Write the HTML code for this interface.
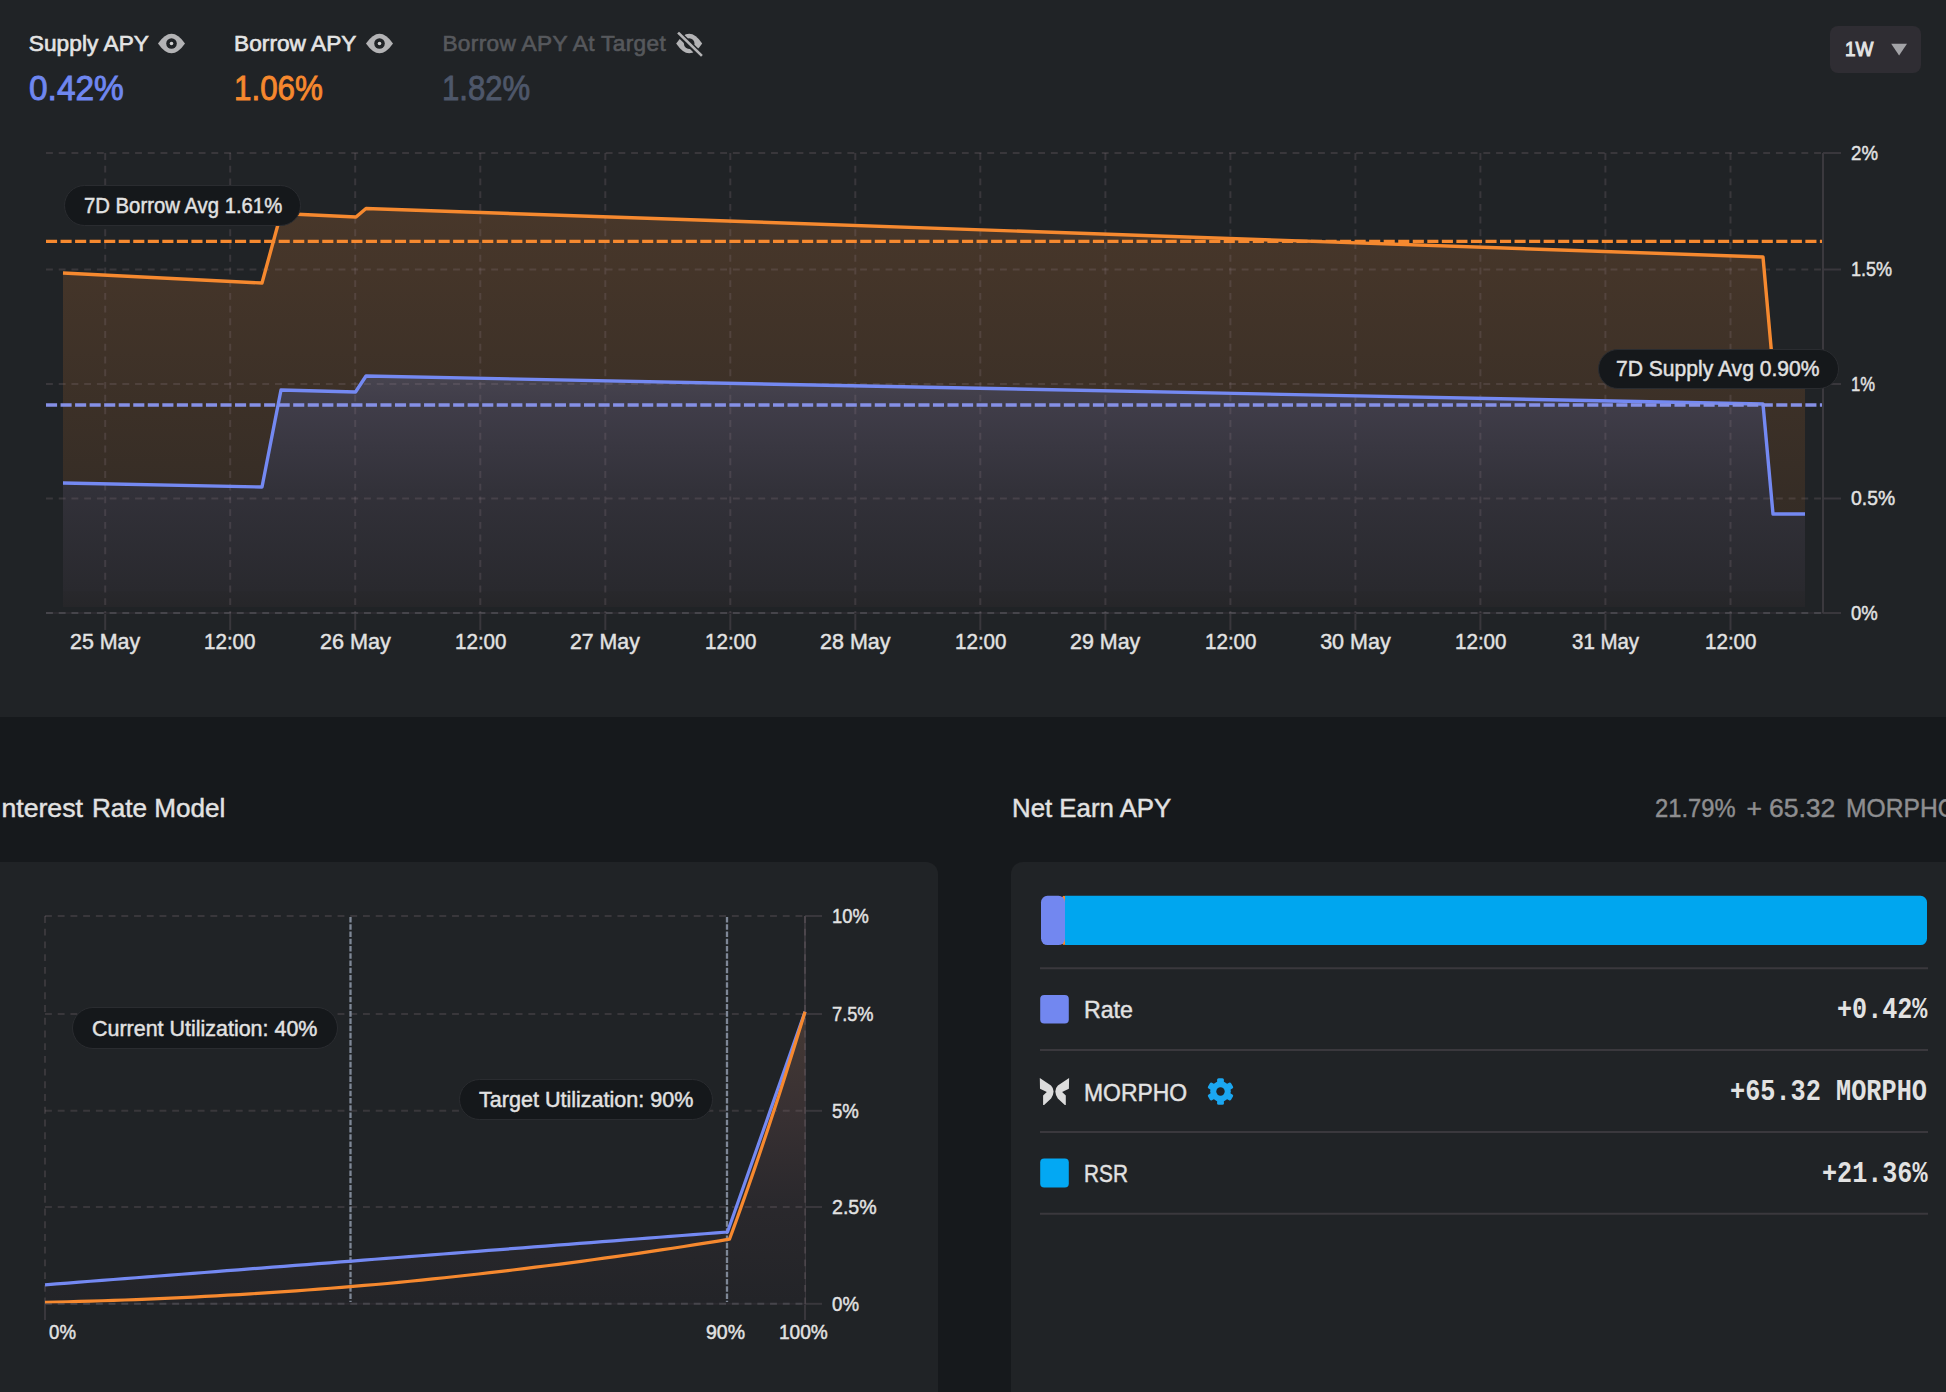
<!DOCTYPE html>
<html><head><meta charset="utf-8"><style>
html,body{margin:0;padding:0}
body{width:1946px;height:1392px;overflow:hidden;position:relative;background:#16191c;font-family:"Liberation Sans",sans-serif}
.b{position:absolute}
.t{position:absolute;white-space:nowrap}
.pill{position:absolute;background:#15181b;border:1.5px solid #2a2c30;border-radius:22px;box-sizing:border-box}
svg{position:absolute;left:0;top:0}
</style></head><body>
<div class="b" style="left:-12px;top:-12px;width:1970px;height:729px;background:#202326;border-radius:12px"></div>
<div class="b" style="left:-40px;top:862px;width:978px;height:600px;background:#202326;border-radius:12px"></div>
<div class="b" style="left:1011px;top:862px;width:1000px;height:600px;background:#202326;border-radius:12px"></div>
<div class="b" style="left:1830.3px;top:26.1px;width:90.7px;height:46.8px;background:#2f2d33;border-radius:8px"></div>
<svg width="1946" height="1392" viewBox="0 0 1946 1392">
<line x1="1823" y1="153" x2="1841" y2="153" stroke="#39373c" stroke-width="2"/>
<line x1="1823" y1="269.5" x2="1841" y2="269.5" stroke="#39373c" stroke-width="2"/>
<line x1="1823" y1="384" x2="1841" y2="384" stroke="#39373c" stroke-width="2"/>
<line x1="1823" y1="498.5" x2="1841" y2="498.5" stroke="#39373c" stroke-width="2"/>
<line x1="1823" y1="613" x2="1841" y2="613" stroke="#39373c" stroke-width="2"/>
<line x1="105.2" y1="613" x2="105.2" y2="630" stroke="#39373c" stroke-width="2"/>
<line x1="230.2" y1="613" x2="230.2" y2="630" stroke="#39373c" stroke-width="2"/>
<line x1="355.2" y1="613" x2="355.2" y2="630" stroke="#39373c" stroke-width="2"/>
<line x1="480.3" y1="613" x2="480.3" y2="630" stroke="#39373c" stroke-width="2"/>
<line x1="605.3" y1="613" x2="605.3" y2="630" stroke="#39373c" stroke-width="2"/>
<line x1="730.3" y1="613" x2="730.3" y2="630" stroke="#39373c" stroke-width="2"/>
<line x1="855.3" y1="613" x2="855.3" y2="630" stroke="#39373c" stroke-width="2"/>
<line x1="980.3" y1="613" x2="980.3" y2="630" stroke="#39373c" stroke-width="2"/>
<line x1="1105.4" y1="613" x2="1105.4" y2="630" stroke="#39373c" stroke-width="2"/>
<line x1="1230.4" y1="613" x2="1230.4" y2="630" stroke="#39373c" stroke-width="2"/>
<line x1="1355.4" y1="613" x2="1355.4" y2="630" stroke="#39373c" stroke-width="2"/>
<line x1="1480.4" y1="613" x2="1480.4" y2="630" stroke="#39373c" stroke-width="2"/>
<line x1="1605.4" y1="613" x2="1605.4" y2="630" stroke="#39373c" stroke-width="2"/>
<line x1="1730.5" y1="613" x2="1730.5" y2="630" stroke="#39373c" stroke-width="2"/>
<defs>
<linearGradient id="gO" x1="0" y1="208" x2="0" y2="607" gradientUnits="userSpaceOnUse"><stop offset="0" stop-color="#48372a"/><stop offset="1" stop-color="#2f2924"/></linearGradient>
<linearGradient id="gS" x1="0" y1="376" x2="0" y2="607" gradientUnits="userSpaceOnUse"><stop offset="0" stop-color="#47444f"/><stop offset="0.12" stop-color="#403d49"/><stop offset="0.5" stop-color="#323139"/><stop offset="0.93" stop-color="#29292e"/><stop offset="0.93" stop-color="#28282c"/><stop offset="1" stop-color="#262629"/></linearGradient>
<linearGradient id="gI" x1="0" y1="1012" x2="0" y2="1304" gradientUnits="userSpaceOnUse"><stop offset="0" stop-color="#4a3c36"/><stop offset="0.34" stop-color="#3b3234"/><stop offset="0.65" stop-color="#2b292d"/><stop offset="1" stop-color="#232428"/></linearGradient>
</defs>
<polygon points="63,273 262,283 281,213.5 356,217 366,208.5 1763,257 1773,369 1805,369 1805,607 63,607" fill="url(#gO)"/>
<polygon points="63,483 262,487 281,390 355.5,392 366,376 1763,404 1773,514 1805,514 1805,607 63,607" fill="url(#gS)"/>
<line x1="46" y1="613" x2="1823" y2="613" stroke="#2b2a2f" stroke-width="2"/>
<line x1="46" y1="613" x2="1823" y2="613" stroke="#46454b" stroke-width="2" stroke-dasharray="6.9 5.82"/>
<line x1="46" y1="153" x2="1823" y2="153" stroke="#927e8a" stroke-opacity="0.22" stroke-width="2" stroke-dasharray="6.9 5.82"/>
<line x1="46" y1="269.5" x2="1823" y2="269.5" stroke="#927e8a" stroke-opacity="0.22" stroke-width="2" stroke-dasharray="6.9 5.82"/>
<line x1="46" y1="384" x2="1823" y2="384" stroke="#927e8a" stroke-opacity="0.22" stroke-width="2" stroke-dasharray="6.9 5.82"/>
<line x1="46" y1="498.5" x2="1823" y2="498.5" stroke="#927e8a" stroke-opacity="0.22" stroke-width="2" stroke-dasharray="6.9 5.82"/>
<line x1="105.2" y1="153" x2="105.2" y2="613" stroke="#927e8a" stroke-opacity="0.22" stroke-width="2" stroke-dasharray="6.9 5.82"/>
<line x1="230.2" y1="153" x2="230.2" y2="613" stroke="#927e8a" stroke-opacity="0.22" stroke-width="2" stroke-dasharray="6.9 5.82"/>
<line x1="355.2" y1="153" x2="355.2" y2="613" stroke="#927e8a" stroke-opacity="0.22" stroke-width="2" stroke-dasharray="6.9 5.82"/>
<line x1="480.3" y1="153" x2="480.3" y2="613" stroke="#927e8a" stroke-opacity="0.22" stroke-width="2" stroke-dasharray="6.9 5.82"/>
<line x1="605.3" y1="153" x2="605.3" y2="613" stroke="#927e8a" stroke-opacity="0.22" stroke-width="2" stroke-dasharray="6.9 5.82"/>
<line x1="730.3" y1="153" x2="730.3" y2="613" stroke="#927e8a" stroke-opacity="0.22" stroke-width="2" stroke-dasharray="6.9 5.82"/>
<line x1="855.3" y1="153" x2="855.3" y2="613" stroke="#927e8a" stroke-opacity="0.22" stroke-width="2" stroke-dasharray="6.9 5.82"/>
<line x1="980.3" y1="153" x2="980.3" y2="613" stroke="#927e8a" stroke-opacity="0.22" stroke-width="2" stroke-dasharray="6.9 5.82"/>
<line x1="1105.4" y1="153" x2="1105.4" y2="613" stroke="#927e8a" stroke-opacity="0.22" stroke-width="2" stroke-dasharray="6.9 5.82"/>
<line x1="1230.4" y1="153" x2="1230.4" y2="613" stroke="#927e8a" stroke-opacity="0.22" stroke-width="2" stroke-dasharray="6.9 5.82"/>
<line x1="1355.4" y1="153" x2="1355.4" y2="613" stroke="#927e8a" stroke-opacity="0.22" stroke-width="2" stroke-dasharray="6.9 5.82"/>
<line x1="1480.4" y1="153" x2="1480.4" y2="613" stroke="#927e8a" stroke-opacity="0.22" stroke-width="2" stroke-dasharray="6.9 5.82"/>
<line x1="1605.4" y1="153" x2="1605.4" y2="613" stroke="#927e8a" stroke-opacity="0.22" stroke-width="2" stroke-dasharray="6.9 5.82"/>
<line x1="1730.5" y1="153" x2="1730.5" y2="613" stroke="#927e8a" stroke-opacity="0.22" stroke-width="2" stroke-dasharray="6.9 5.82"/>
<line x1="1823" y1="153" x2="1823" y2="613" stroke="#3b393e" stroke-width="2"/>
<polyline points="63,273 262,283 281,213.5 356,217 366,208.5 1763,257 1773,369 1805,369" fill="none" stroke="#f6892f" stroke-width="3.4" stroke-linejoin="round"/>
<polyline points="63,483 262,487 281,390 355.5,392 366,376 1763,404 1773,514 1805,514" fill="none" stroke="#7489f2" stroke-width="3.4" stroke-linejoin="round"/>
<line x1="46" y1="241.3" x2="1822" y2="241.3" stroke="#f6892f" stroke-width="3.3" stroke-dasharray="11.1 3.44"/>
<line x1="46" y1="405" x2="1822" y2="405" stroke="#8590e6" stroke-width="3.3" stroke-dasharray="11.1 3.44"/>
<line x1="805" y1="916" x2="822" y2="916" stroke="#39373c" stroke-width="2"/>
<line x1="805" y1="1014" x2="822" y2="1014" stroke="#39373c" stroke-width="2"/>
<line x1="805" y1="1110.8" x2="822" y2="1110.8" stroke="#39373c" stroke-width="2"/>
<line x1="805" y1="1207" x2="822" y2="1207" stroke="#39373c" stroke-width="2"/>
<line x1="805" y1="1303.8" x2="822" y2="1303.8" stroke="#39373c" stroke-width="2"/>
<line x1="45" y1="1304" x2="45" y2="1320" stroke="#39373c" stroke-width="2"/>
<line x1="805" y1="916" x2="805" y2="1320" stroke="#39373c" stroke-width="2"/>
<polygon points="45.0,1284.794 56.375,1283.9138866666667 67.75,1283.0337733333333 79.125,1282.15366 90.5,1281.2735466666666 101.875,1280.3934333333334 113.25,1279.51332 124.625,1278.6332066666666 136.0,1277.7530933333333 147.375,1276.87298 158.75,1275.9928666666667 170.125,1275.1127533333333 181.5,1274.23264 192.875,1273.3525266666666 204.25,1272.4724133333334 215.625,1271.5923 227.0,1270.7121866666666 238.375,1269.8320733333333 249.75,1268.95196 261.125,1268.0718466666667 272.5,1267.1917333333333 283.875,1266.31162 295.25,1265.4315066666666 306.625,1264.5513933333334 318.0,1263.67128 329.375,1262.7911666666666 340.75,1261.9110533333333 352.125,1261.03094 363.5,1260.1508266666667 374.875,1259.2707133333333 386.25,1258.3906 397.625,1257.5104866666666 409.0,1256.6303733333334 420.375,1255.75026 431.75,1254.8701466666666 443.125,1253.9900333333333 454.5,1253.10992 465.875,1252.2298066666667 477.25,1251.3496933333333 488.625,1250.46958 500.0,1249.5894666666666 511.375,1248.7093533333334 522.75,1247.82924 534.125,1246.9491266666666 545.5,1246.0690133333333 556.875,1245.1889 568.25,1244.3087866666667 579.625,1243.4286733333333 591.0,1242.54856 602.375,1241.6684466666666 613.75,1240.7883333333334 625.125,1239.90822 636.5,1239.0281066666666 647.875,1238.1479933333333 659.25,1237.2678799999999 670.625,1236.3877666666667 682.0,1235.5076533333333 693.375,1234.62754 704.75,1233.7474266666666 716.125,1232.8673133333334 727.5,1231.9872 731.375,1220.97964 735.25,1209.97208 739.125,1198.96452 743.0,1187.95696 746.875,1176.9494 750.75,1165.94184 754.625,1154.93428 758.5,1143.92672 762.375,1132.91916 766.25,1121.9116 770.125,1110.90404 774.0,1099.8964799999999 777.875,1088.88892 781.75,1077.88136 785.625,1066.8738 789.5,1055.86624 793.375,1044.85868 797.25,1033.85112 801.125,1022.84356 805.0,1011.836 805,1304 45,1304" fill="url(#gI)" fill-opacity="0.9"/>
<line x1="45" y1="1303.8" x2="805" y2="1303.8" stroke="#2b2a2f" stroke-width="2"/>
<line x1="45" y1="1303.8" x2="805" y2="1303.8" stroke="#46454b" stroke-width="2" stroke-dasharray="6.9 5.82"/>
<line x1="45" y1="916" x2="805" y2="916" stroke="#927e8a" stroke-opacity="0.22" stroke-width="2" stroke-dasharray="6.9 5.82"/>
<line x1="45" y1="1014" x2="805" y2="1014" stroke="#927e8a" stroke-opacity="0.22" stroke-width="2" stroke-dasharray="6.9 5.82"/>
<line x1="45" y1="1110.8" x2="805" y2="1110.8" stroke="#927e8a" stroke-opacity="0.22" stroke-width="2" stroke-dasharray="6.9 5.82"/>
<line x1="45" y1="1207" x2="805" y2="1207" stroke="#927e8a" stroke-opacity="0.22" stroke-width="2" stroke-dasharray="6.9 5.82"/>
<line x1="45" y1="916" x2="45" y2="1304" stroke="#927e8a" stroke-opacity="0.22" stroke-width="2" stroke-dasharray="6.9 5.82"/>
<line x1="805" y1="916" x2="805" y2="1304" stroke="#927e8a" stroke-opacity="0.22" stroke-width="2" stroke-dasharray="6.9 5.82"/>
<line x1="350.5" y1="917" x2="350.5" y2="1302" stroke="#7e8796" stroke-width="2.3" stroke-dasharray="5.6 1.64"/>
<line x1="727" y1="917" x2="727" y2="1302" stroke="#7e8796" stroke-width="2.3" stroke-dasharray="5.6 1.64"/>
<clipPath id="cI"><rect x="0" y="900" width="940" height="403.6"/></clipPath>
<g clip-path="url(#cI)"><polyline points="45.0,1284.794 56.375,1283.9138866666667 67.75,1283.0337733333333 79.125,1282.15366 90.5,1281.2735466666666 101.875,1280.3934333333334 113.25,1279.51332 124.625,1278.6332066666666 136.0,1277.7530933333333 147.375,1276.87298 158.75,1275.9928666666667 170.125,1275.1127533333333 181.5,1274.23264 192.875,1273.3525266666666 204.25,1272.4724133333334 215.625,1271.5923 227.0,1270.7121866666666 238.375,1269.8320733333333 249.75,1268.95196 261.125,1268.0718466666667 272.5,1267.1917333333333 283.875,1266.31162 295.25,1265.4315066666666 306.625,1264.5513933333334 318.0,1263.67128 329.375,1262.7911666666666 340.75,1261.9110533333333 352.125,1261.03094 363.5,1260.1508266666667 374.875,1259.2707133333333 386.25,1258.3906 397.625,1257.5104866666666 409.0,1256.6303733333334 420.375,1255.75026 431.75,1254.8701466666666 443.125,1253.9900333333333 454.5,1253.10992 465.875,1252.2298066666667 477.25,1251.3496933333333 488.625,1250.46958 500.0,1249.5894666666666 511.375,1248.7093533333334 522.75,1247.82924 534.125,1246.9491266666666 545.5,1246.0690133333333 556.875,1245.1889 568.25,1244.3087866666667 579.625,1243.4286733333333 591.0,1242.54856 602.375,1241.6684466666666 613.75,1240.7883333333334 625.125,1239.90822 636.5,1239.0281066666666 647.875,1238.1479933333333 659.25,1237.2678799999999 670.625,1236.3877666666667 682.0,1235.5076533333333 693.375,1234.62754 704.75,1233.7474266666666 716.125,1232.8673133333334 727.5,1231.9872 731.375,1220.97964 735.25,1209.97208 739.125,1198.96452 743.0,1187.95696 746.875,1176.9494 750.75,1165.94184 754.625,1154.93428 758.5,1143.92672 762.375,1132.91916 766.25,1121.9116 770.125,1110.90404 774.0,1099.8964799999999 777.875,1088.88892 781.75,1077.88136 785.625,1066.8738 789.5,1055.86624 793.375,1044.85868 797.25,1033.85112 801.125,1022.84356 805.0,1011.836" fill="none" stroke="#7489f2" stroke-width="3.2" stroke-linejoin="round"/>
<polyline points="45.0,1302.254 56.40833333333333,1302.0109083 67.81666666666666,1301.7414132 79.225,1301.4455147 90.63333333333333,1301.1232128 102.04166666666666,1300.7745075 113.45,1300.3993988 124.85833333333333,1299.9978867 136.26666666666665,1299.5699712 147.675,1299.1156523 159.08333333333331,1298.63493 170.49166666666667,1298.1278043 181.9,1297.5942752 193.30833333333334,1297.0343427 204.71666666666667,1296.4480068 216.125,1295.8352675 227.53333333333333,1295.1961248 238.94166666666666,1294.5305787 250.35,1293.8386292 261.7583333333333,1293.1202763 273.16666666666663,1292.37552 284.575,1291.6043603 295.98333333333335,1290.8067972 307.39166666666665,1289.9828307 318.8,1289.1324608 330.2083333333333,1288.2556875 341.6166666666667,1287.3525108 353.025,1286.4229307 364.43333333333334,1285.4669472 375.84166666666664,1284.4845603 387.25,1283.47577 398.65833333333336,1282.3823763 410.06666666666666,1281.2625792 421.475,1280.1163787 432.8833333333333,1278.9437748 444.2916666666667,1277.7447675 455.7,1276.5193568 467.10833333333335,1275.2675427 478.51666666666665,1273.9893252 489.925,1272.6847043 501.3333333333333,1271.35368 512.7416666666667,1269.9962523 524.15,1268.6124212 535.5583333333334,1267.2021867 546.9666666666667,1265.7655488 558.375,1264.3025075 569.7833333333333,1262.8130628 581.1916666666667,1261.2972147 592.6,1259.7549632 604.0083333333333,1258.1863083 615.4166666666666,1256.59125 626.825,1254.9697883 638.2333333333333,1253.3219232 649.6416666666667,1251.6476547 661.05,1249.9469828 672.4583333333334,1248.2199075 683.8666666666667,1246.4664288 695.275,1244.6865467 706.6833333333333,1242.8802612 718.0916666666667,1241.0475723 729.5,1239.18848 733.275,1228.8665742 737.05,1218.4345928 740.825,1207.8925358 744.6,1197.2404032 748.375,1186.478195 752.15,1175.6059112 755.925,1164.6235518 759.7,1153.5311168 763.475,1142.3286062 767.25,1131.01602 771.025,1119.5933582 774.8,1108.0606208 778.575,1096.4178078 782.35,1084.6649192 786.125,1072.8019550000001 789.9,1060.8289152 793.675,1048.7457998 797.45,1036.5526088000001 801.225,1024.2493422 805.0,1011.836" fill="none" stroke="#f6892f" stroke-width="3.2" stroke-linejoin="round"/></g>
<rect x="1061" y="895.8" width="6" height="49.3" rx="6" fill="#f6892f"/>
<path d="M1065,895.8 H1920.5 A6.5,6.5 0 0 1 1927,902.3 V938.6 A6.5,6.5 0 0 1 1920.5,945.1 H1065 Z" fill="#00a6ef"/>
<rect x="1041" y="895.8" width="24" height="49.3" rx="6.5" fill="#7287f0"/>
<line x1="1040" y1="968.2" x2="1928" y2="968.2" stroke="#3a383d" stroke-width="2"/>
<line x1="1040" y1="1050" x2="1928" y2="1050" stroke="#3a383d" stroke-width="2"/>
<line x1="1040" y1="1132" x2="1928" y2="1132" stroke="#3a383d" stroke-width="2"/>
<line x1="1040" y1="1213.8" x2="1928" y2="1213.8" stroke="#3a383d" stroke-width="2"/>
<rect x="1040.2" y="995" width="28.6" height="28.6" rx="4" fill="#7287f0"/>
<rect x="1040.2" y="1158.6" width="28.6" height="28.8" rx="4" fill="#03a8f3"/>
<g transform="translate(1039.8,1077.8)" fill="#dcdcdc"><path d="M0,0.2 L11.2,7.6 Q13.9,10.2 13.8,13.8 Q13.6,17.6 11.3,20.6 L4.3,27.3 L3.3,27.1 L3.3,17.8 L7,14.3 L0.2,11 Z"/><path d="M0,0.2 L11.2,7.6 Q13.9,10.2 13.8,13.8 Q13.6,17.6 11.3,20.6 L4.3,27.3 L3.3,27.1 L3.3,17.8 L7,14.3 L0.2,11 Z" transform="translate(29.3,0) scale(-1,1)"/></g>
<g fill="#1ba7f1"><rect x="1217.10" y="1078.20" width="6.8" height="8" rx="1.5" transform="rotate(0 1220.5 1091.5)"/><rect x="1217.10" y="1078.20" width="6.8" height="8" rx="1.5" transform="rotate(60 1220.5 1091.5)"/><rect x="1217.10" y="1078.20" width="6.8" height="8" rx="1.5" transform="rotate(120 1220.5 1091.5)"/><rect x="1217.10" y="1078.20" width="6.8" height="8" rx="1.5" transform="rotate(180 1220.5 1091.5)"/><rect x="1217.10" y="1078.20" width="6.8" height="8" rx="1.5" transform="rotate(240 1220.5 1091.5)"/><rect x="1217.10" y="1078.20" width="6.8" height="8" rx="1.5" transform="rotate(300 1220.5 1091.5)"/><circle cx="1220.5" cy="1091.5" r="10.3"/></g><circle cx="1220.5" cy="1091.5" r="4.2" fill="#202326"/>
<path d="M158.0,43.5 Q171.5,24.0 185.0,43.5 Q171.5,63.0 158.0,43.5 Z" fill="#b3b3b5"/><circle cx="171.5" cy="43.5" r="5.3" fill="#202326"/><circle cx="171.5" cy="43.5" r="1.8" fill="#d0d0d0"/>
<path d="M366.0,43.5 Q379.5,24.0 393.0,43.5 Q379.5,63.0 366.0,43.5 Z" fill="#b3b3b5"/><circle cx="379.5" cy="43.5" r="5.3" fill="#202326"/><circle cx="379.5" cy="43.5" r="1.8" fill="#d0d0d0"/>
<path d="M676.2,43.6 Q689.2,24.1 702.2,43.6 Q689.2,63.1 676.2,43.6 Z" fill="#b3b3b5"/><circle cx="689.2" cy="43.6" r="5.3" fill="#202326"/><circle cx="689.2" cy="43.6" r="1.8" fill="#d0d0d0"/>
<line x1="678.5" y1="33.5" x2="700.5" y2="55" stroke="#202326" stroke-width="6"/><line x1="679" y1="33.5" x2="701" y2="55" stroke="#b3b3b5" stroke-width="2.6" stroke-linecap="square"/>
<polygon points="1891.2,43.8 1907,43.8 1899.1,55.5" fill="#a3a3a7"/>
</svg>
<div class="pill" style="left:63.8px;top:185.3px;width:237.4px;height:41.2px"></div>
<div class="pill" style="left:1597.8px;top:348.6px;width:241.5px;height:40.2px"></div>
<div class="pill" style="left:72.1px;top:1007.3px;width:265.7px;height:41.3px"></div>
<div class="pill" style="left:459.3px;top:1079.3px;width:254.2px;height:41.1px"></div>
<div class="t" style="left:28.80px;top:32.95px;font:400 22.63px/22.63px 'Liberation Sans', sans-serif;letter-spacing:0.067px;color:#e4e4e4;-webkit-text-stroke:0.65px #e4e4e4">Supply APY</div>
<div class="t" style="left:234.10px;top:32.95px;font:400 22.63px/22.63px 'Liberation Sans', sans-serif;letter-spacing:0.033px;color:#e4e4e4;-webkit-text-stroke:0.65px #e4e4e4">Borrow APY</div>
<div class="t" style="left:442.40px;top:32.95px;font:400 22.63px/22.63px 'Liberation Sans', sans-serif;letter-spacing:0.347px;color:#56585c;-webkit-text-stroke:0.65px #56585c">Borrow APY At Target</div>
<div class="t" style="left:29.20px;top:71.27px;font:400 35.47px/35.47px 'Liberation Sans', sans-serif;letter-spacing:0.000px;color:#6f87f0;-webkit-text-stroke:0.9px #6f87f0;transform:scaleX(0.9433);transform-origin:0 0">0.42%</div>
<div class="t" style="left:234.00px;top:71.27px;font:400 35.47px/35.47px 'Liberation Sans', sans-serif;letter-spacing:0.000px;color:#f6882e;-webkit-text-stroke:0.9px #f6882e;transform:scaleX(0.8836);transform-origin:0 0">1.06%</div>
<div class="t" style="left:442.00px;top:71.27px;font:400 35.47px/35.47px 'Liberation Sans', sans-serif;letter-spacing:0.000px;color:#4e576a;-webkit-text-stroke:0.9px #4e576a;transform:scaleX(0.8756);transform-origin:0 0">1.82%</div>
<div class="t" style="left:1844.50px;top:39.27px;font:400 20.95px/20.95px 'Liberation Sans', sans-serif;letter-spacing:0.000px;color:#e4e4e4;-webkit-text-stroke:1.0px #e4e4e4;transform:scaleX(0.9062);transform-origin:0 0">1W</div>
<div class="t" style="left:1850.70px;top:142.77px;font:400 20.95px/20.95px 'Liberation Sans', sans-serif;letter-spacing:0.000px;color:#e2e2e2;-webkit-text-stroke:0.45px #e2e2e2;transform:scaleX(0.8911);transform-origin:0 0">2%</div>
<div class="t" style="left:1850.70px;top:259.27px;font:400 20.95px/20.95px 'Liberation Sans', sans-serif;letter-spacing:0.000px;color:#e2e2e2;-webkit-text-stroke:0.45px #e2e2e2;transform:scaleX(0.8628);transform-origin:0 0">1.5%</div>
<div class="t" style="left:1850.70px;top:373.77px;font:400 20.95px/20.95px 'Liberation Sans', sans-serif;letter-spacing:0.000px;color:#e2e2e2;-webkit-text-stroke:0.45px #e2e2e2;transform:scaleX(0.7954);transform-origin:0 0">1%</div>
<div class="t" style="left:1850.70px;top:488.27px;font:400 20.95px/20.95px 'Liberation Sans', sans-serif;letter-spacing:0.000px;color:#e2e2e2;-webkit-text-stroke:0.45px #e2e2e2;transform:scaleX(0.9236);transform-origin:0 0">0.5%</div>
<div class="t" style="left:1850.70px;top:602.77px;font:400 20.95px/20.95px 'Liberation Sans', sans-serif;letter-spacing:0.000px;color:#e2e2e2;-webkit-text-stroke:0.45px #e2e2e2;transform:scaleX(0.8845);transform-origin:0 0">0%</div>
<div class="t" style="left:70.10px;top:631.89px;font:400 21.51px/21.51px 'Liberation Sans', sans-serif;letter-spacing:0.000px;color:#e2e2e2;-webkit-text-stroke:0.45px #e2e2e2;transform:scaleX(0.9957);transform-origin:0 0">25 May</div>
<div class="t" style="left:204.47px;top:631.89px;font:400 21.51px/21.51px 'Liberation Sans', sans-serif;letter-spacing:0.000px;color:#e2e2e2;-webkit-text-stroke:0.45px #e2e2e2;transform:scaleX(0.9572);transform-origin:0 0">12:00</div>
<div class="t" style="left:319.79px;top:631.89px;font:400 21.51px/21.51px 'Liberation Sans', sans-serif;letter-spacing:0.000px;color:#e2e2e2;-webkit-text-stroke:0.45px #e2e2e2;transform:scaleX(1.0057);transform-origin:0 0">26 May</div>
<div class="t" style="left:454.51px;top:631.89px;font:400 21.51px/21.51px 'Liberation Sans', sans-serif;letter-spacing:0.000px;color:#e2e2e2;-webkit-text-stroke:0.45px #e2e2e2;transform:scaleX(0.9572);transform-origin:0 0">12:00</div>
<div class="t" style="left:570.38px;top:631.89px;font:400 21.51px/21.51px 'Liberation Sans', sans-serif;letter-spacing:0.000px;color:#e2e2e2;-webkit-text-stroke:0.45px #e2e2e2;transform:scaleX(0.9901);transform-origin:0 0">27 May</div>
<div class="t" style="left:704.55px;top:631.89px;font:400 21.51px/21.51px 'Liberation Sans', sans-serif;letter-spacing:0.000px;color:#e2e2e2;-webkit-text-stroke:0.45px #e2e2e2;transform:scaleX(0.9572);transform-origin:0 0">12:00</div>
<div class="t" style="left:820.07px;top:631.89px;font:400 21.51px/21.51px 'Liberation Sans', sans-serif;letter-spacing:0.000px;color:#e2e2e2;-webkit-text-stroke:0.45px #e2e2e2">28 May</div>
<div class="t" style="left:954.59px;top:631.89px;font:400 21.51px/21.51px 'Liberation Sans', sans-serif;letter-spacing:0.000px;color:#e2e2e2;-webkit-text-stroke:0.45px #e2e2e2;transform:scaleX(0.9572);transform-origin:0 0">12:00</div>
<div class="t" style="left:1070.21px;top:631.89px;font:400 21.51px/21.51px 'Liberation Sans', sans-serif;letter-spacing:0.000px;color:#e2e2e2;-webkit-text-stroke:0.45px #e2e2e2;transform:scaleX(0.9972);transform-origin:0 0">29 May</div>
<div class="t" style="left:1204.63px;top:631.89px;font:400 21.51px/21.51px 'Liberation Sans', sans-serif;letter-spacing:0.000px;color:#e2e2e2;-webkit-text-stroke:0.45px #e2e2e2;transform:scaleX(0.9572);transform-origin:0 0">12:00</div>
<div class="t" style="left:1320.15px;top:631.89px;font:400 21.51px/21.51px 'Liberation Sans', sans-serif;letter-spacing:0.000px;color:#e2e2e2;-webkit-text-stroke:0.45px #e2e2e2">30 May</div>
<div class="t" style="left:1454.67px;top:631.89px;font:400 21.51px/21.51px 'Liberation Sans', sans-serif;letter-spacing:0.000px;color:#e2e2e2;-webkit-text-stroke:0.45px #e2e2e2;transform:scaleX(0.9572);transform-origin:0 0">12:00</div>
<div class="t" style="left:1571.89px;top:631.89px;font:400 21.51px/21.51px 'Liberation Sans', sans-serif;letter-spacing:0.000px;color:#e2e2e2;-webkit-text-stroke:0.45px #e2e2e2;transform:scaleX(0.9518);transform-origin:0 0">31 May</div>
<div class="t" style="left:1704.71px;top:631.89px;font:400 21.51px/21.51px 'Liberation Sans', sans-serif;letter-spacing:0.000px;color:#e2e2e2;-webkit-text-stroke:0.45px #e2e2e2;transform:scaleX(0.9572);transform-origin:0 0">12:00</div>
<div class="t" style="left:83.90px;top:195.69px;font:400 21.51px/21.51px 'Liberation Sans', sans-serif;letter-spacing:0.000px;color:#e2e2e2;-webkit-text-stroke:0.45px #e2e2e2;transform:scaleX(0.9440);transform-origin:0 0">7D Borrow Avg 1.61%</div>
<div class="t" style="left:1616.30px;top:358.79px;font:400 21.51px/21.51px 'Liberation Sans', sans-serif;letter-spacing:0.000px;color:#e2e2e2;-webkit-text-stroke:0.45px #e2e2e2;transform:scaleX(0.9803);transform-origin:0 0">7D Supply Avg 0.90%</div>
<div class="t" style="left:92.30px;top:795.47px;font:400 26.26px/26.26px 'Liberation Sans', sans-serif;letter-spacing:0.000px;color:#e2e2e2;-webkit-text-stroke:0.45px #e2e2e2;transform:scaleX(0.9937);transform-origin:0 0">Rate Model</div>
<div class="t" style="left:-6.50px;top:795.47px;font:400 26.26px/26.26px 'Liberation Sans', sans-serif;letter-spacing:0.000px;color:#e2e2e2;-webkit-text-stroke:0.45px #e2e2e2;transform:scaleX(1.0154);transform-origin:0 0">Interest</div>
<div class="t" style="left:1012.30px;top:795.47px;font:400 26.26px/26.26px 'Liberation Sans', sans-serif;letter-spacing:0.000px;color:#e2e2e2;-webkit-text-stroke:0.45px #e2e2e2;transform:scaleX(0.9836);transform-origin:0 0">Net Earn APY</div>
<div class="t" style="left:1655.00px;top:795.44px;font:400 26.54px/26.54px 'Liberation Sans', sans-serif;letter-spacing:0.000px;color:#8e8e90;-webkit-text-stroke:0.45px #8e8e90;transform:scaleX(0.8951);transform-origin:0 0">21.79%</div>
<div class="t" style="left:1746.60px;top:795.44px;font:400 26.54px/26.54px 'Liberation Sans', sans-serif;letter-spacing:0.000px;color:#8e8e90;-webkit-text-stroke:0.45px #8e8e90">+</div>
<div class="t" style="left:1769.40px;top:795.44px;font:400 26.54px/26.54px 'Liberation Sans', sans-serif;letter-spacing:0.000px;color:#8e8e90;-webkit-text-stroke:0.45px #8e8e90;transform:scaleX(0.9992);transform-origin:0 0">65.32</div>
<div class="t" style="left:1846.00px;top:795.44px;font:400 26.54px/26.54px 'Liberation Sans', sans-serif;letter-spacing:0.000px;color:#8e8e90;-webkit-text-stroke:0.45px #8e8e90;transform:scaleX(0.9289);transform-origin:0 0">MORPHO</div>
<div class="t" style="left:832.20px;top:906.07px;font:400 20.95px/20.95px 'Liberation Sans', sans-serif;letter-spacing:0.000px;color:#e2e2e2;-webkit-text-stroke:0.45px #e2e2e2;transform:scaleX(0.8749);transform-origin:0 0">10%</div>
<div class="t" style="left:832.20px;top:1004.07px;font:400 20.95px/20.95px 'Liberation Sans', sans-serif;letter-spacing:0.000px;color:#e2e2e2;-webkit-text-stroke:0.45px #e2e2e2;transform:scaleX(0.8712);transform-origin:0 0">7.5%</div>
<div class="t" style="left:832.20px;top:1100.87px;font:400 20.95px/20.95px 'Liberation Sans', sans-serif;letter-spacing:0.000px;color:#e2e2e2;-webkit-text-stroke:0.45px #e2e2e2;transform:scaleX(0.8878);transform-origin:0 0">5%</div>
<div class="t" style="left:832.20px;top:1197.07px;font:400 20.95px/20.95px 'Liberation Sans', sans-serif;letter-spacing:0.000px;color:#e2e2e2;-webkit-text-stroke:0.45px #e2e2e2;transform:scaleX(0.9361);transform-origin:0 0">2.5%</div>
<div class="t" style="left:832.20px;top:1293.87px;font:400 20.95px/20.95px 'Liberation Sans', sans-serif;letter-spacing:0.000px;color:#e2e2e2;-webkit-text-stroke:0.45px #e2e2e2;transform:scaleX(0.8911);transform-origin:0 0">0%</div>
<div class="t" style="left:48.80px;top:1322.37px;font:400 20.95px/20.95px 'Liberation Sans', sans-serif;letter-spacing:0.000px;color:#e2e2e2;-webkit-text-stroke:0.45px #e2e2e2;transform:scaleX(0.8911);transform-origin:0 0">0%</div>
<div class="t" style="left:706.30px;top:1322.17px;font:400 20.95px/20.95px 'Liberation Sans', sans-serif;letter-spacing:0.000px;color:#e2e2e2;-webkit-text-stroke:0.45px #e2e2e2;transform:scaleX(0.9321);transform-origin:0 0">90%</div>
<div class="t" style="left:779.30px;top:1322.17px;font:400 20.95px/20.95px 'Liberation Sans', sans-serif;letter-spacing:0.000px;color:#e2e2e2;-webkit-text-stroke:0.45px #e2e2e2;transform:scaleX(0.9123);transform-origin:0 0">100%</div>
<div class="t" style="left:92.00px;top:1017.76px;font:400 21.79px/21.79px 'Liberation Sans', sans-serif;letter-spacing:0.000px;color:#e2e2e2;-webkit-text-stroke:0.45px #e2e2e2;transform:scaleX(0.9852);transform-origin:0 0">Current Utilization: 40%</div>
<div class="t" style="left:478.90px;top:1089.36px;font:400 21.79px/21.79px 'Liberation Sans', sans-serif;letter-spacing:0.000px;color:#e2e2e2;-webkit-text-stroke:0.45px #e2e2e2;transform:scaleX(0.9894);transform-origin:0 0">Target Utilization: 90%</div>
<div class="t" style="left:1084.10px;top:998.45px;font:400 24.16px/24.16px 'Liberation Sans', sans-serif;letter-spacing:0.000px;color:#e2e2e2;-webkit-text-stroke:0.45px #e2e2e2;transform:scaleX(0.9588);transform-origin:0 0">Rate</div>
<div class="t" style="left:1084.10px;top:1081.05px;font:400 24.16px/24.16px 'Liberation Sans', sans-serif;letter-spacing:0.000px;color:#e2e2e2;-webkit-text-stroke:0.45px #e2e2e2;transform:scaleX(0.9485);transform-origin:0 0">MORPHO</div>
<div class="t" style="left:1084.10px;top:1162.45px;font:400 24.16px/24.16px 'Liberation Sans', sans-serif;letter-spacing:0.000px;color:#e2e2e2;-webkit-text-stroke:0.45px #e2e2e2;transform:scaleX(0.8608);transform-origin:0 0">RSR</div>
<div class="t" style="left:1837.40px;top:997.43px;font:700 28.79px/28.79px 'Liberation Mono', monospace;letter-spacing:0.000px;color:#e2e2e2;transform:scaleX(0.8727);transform-origin:0 0">+0.42%</div>
<div class="t" style="left:1730.40px;top:1079.13px;font:700 28.79px/28.79px 'Liberation Mono', monospace;letter-spacing:0.000px;color:#e2e2e2;transform:scaleX(0.8772);transform-origin:0 0">+65.32 MORPHO</div>
<div class="t" style="left:1822.30px;top:1161.43px;font:700 28.79px/28.79px 'Liberation Mono', monospace;letter-spacing:0.000px;color:#e2e2e2;transform:scaleX(0.8727);transform-origin:0 0">+21.36%</div>
</body></html>
